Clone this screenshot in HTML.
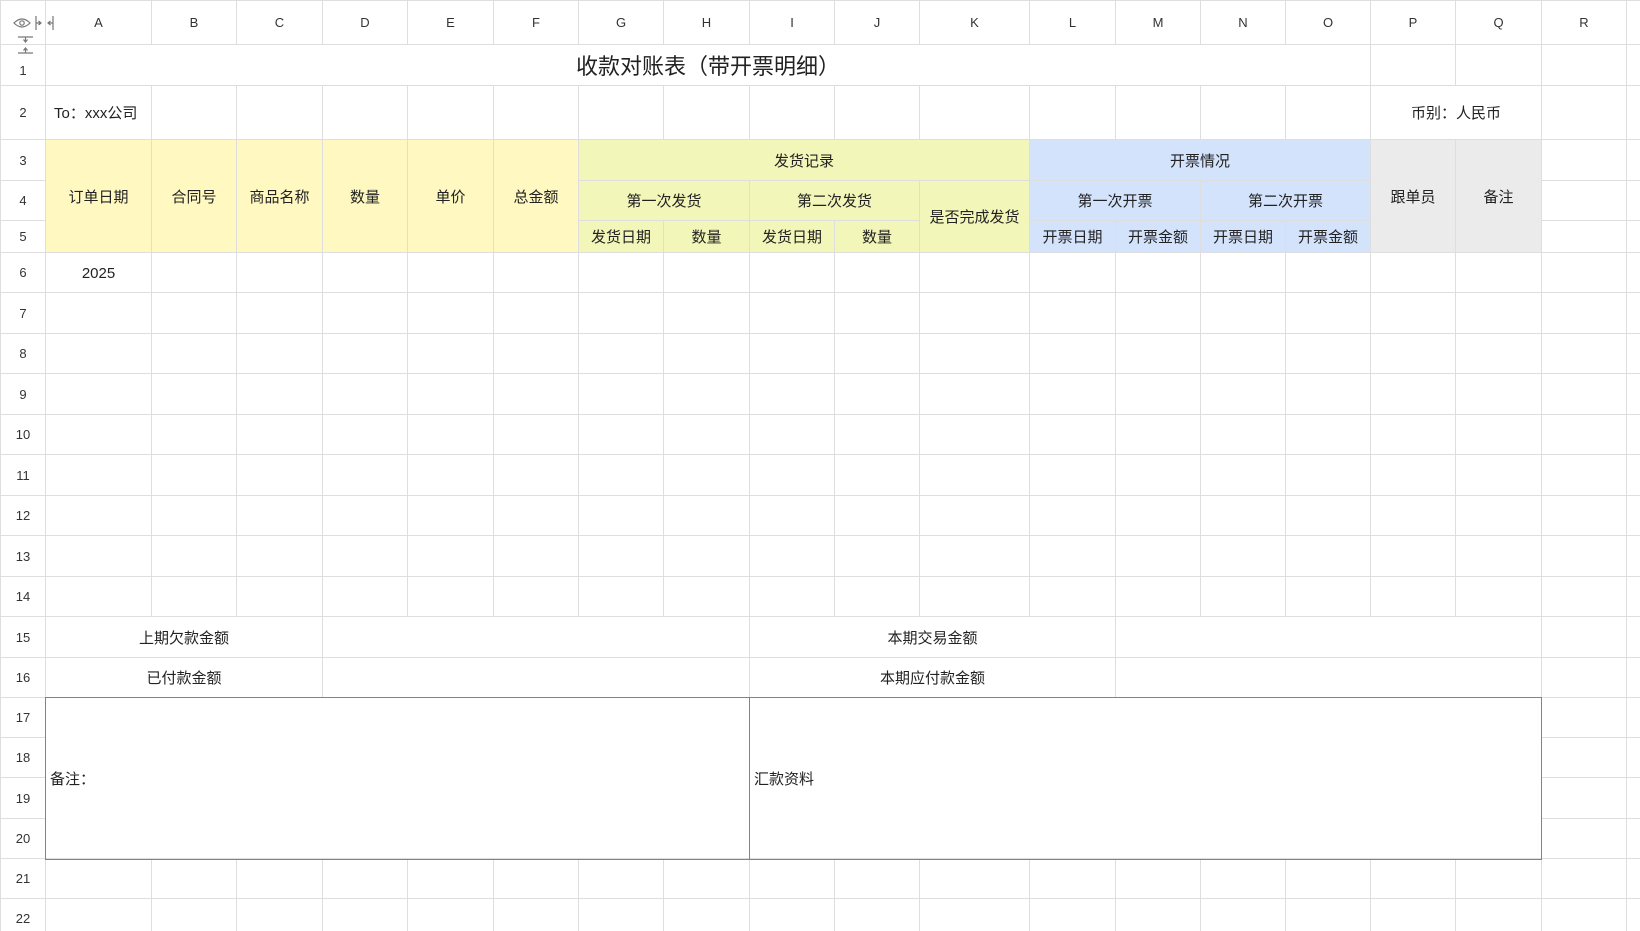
<!DOCTYPE html>
<html><head><meta charset="utf-8">
<style>
html,body{margin:0;padding:0;background:#fff;overflow:hidden;width:1640px;height:931px}
table{border-collapse:collapse;table-layout:fixed;width:1640px;font-family:"Liberation Sans","Noto Sans CJK SC",sans-serif;font-size:15px;color:#222}
td{border:1px solid #dedede;padding:0;text-align:center;vertical-align:middle;white-space:nowrap;overflow:hidden}
tr.h td{font-size:13px;color:#333;background:#fff}
td.rh{font-size:13px;color:#333;background:#fff}
.y{background:#fff9c1}
.g{background:#f2f6b8}
.b{background:#d4e3fc}
.gr{background:#ebebeb}
.l{text-align:left;padding-left:6px}
.ov{position:absolute;border:1px solid #7e8296;box-sizing:border-box;pointer-events:none}
</style></head><body>
<table>
<colgroup><col style="width:45px"><col style="width:106px"><col style="width:85px"><col style="width:86px"><col style="width:85px"><col style="width:86px"><col style="width:85px"><col style="width:85px"><col style="width:86px"><col style="width:85px"><col style="width:85px"><col style="width:110px"><col style="width:86px"><col style="width:85px"><col style="width:85px"><col style="width:85px"><col style="width:85px"><col style="width:86px"><col style="width:85px"><col style="width:14px"></colgroup>
<tr class="h" style="height:44px"><td></td><td>A</td><td>B</td><td>C</td><td>D</td><td>E</td><td>F</td><td>G</td><td>H</td><td>I</td><td>J</td><td>K</td><td>L</td><td>M</td><td>N</td><td>O</td><td>P</td><td>Q</td><td>R</td><td></td></tr>
<tr style="height:41px"><td class="rh" style="padding-top:10px">1</td><td colspan="15" style="font-size:22px">收款对账表（带开票明细）</td><td></td><td></td><td></td><td></td></tr>
<tr style="height:54px"><td class="rh">2</td><td class="l" style="padding-left:8px">To：xxx公司</td><td></td><td></td><td></td><td></td><td></td><td></td><td></td><td></td><td></td><td></td><td></td><td></td><td></td><td></td><td colspan="2">币别：人民币</td><td></td><td></td></tr>
<tr style="height:41px"><td class="rh">3</td><td rowspan="3" class="y">订单日期</td><td rowspan="3" class="y">合同号</td><td rowspan="3" class="y">商品名称</td><td rowspan="3" class="y">数量</td><td rowspan="3" class="y">单价</td><td rowspan="3" class="y">总金额</td><td colspan="5" class="g">发货记录</td><td colspan="4" class="b">开票情况</td><td rowspan="3" class="gr">跟单员</td><td rowspan="3" class="gr">备注</td><td></td><td></td></tr>
<tr style="height:40px"><td class="rh">4</td><td colspan="2" class="g">第一次发货</td><td colspan="2" class="g">第二次发货</td><td rowspan="2" class="g">是否完成发货</td><td colspan="2" class="b">第一次开票</td><td colspan="2" class="b">第二次开票</td><td></td><td></td></tr>
<tr style="height:32px"><td class="rh">5</td><td class="g">发货日期</td><td class="g">数量</td><td class="g">发货日期</td><td class="g">数量</td><td class="b">开票日期</td><td class="b">开票金额</td><td class="b">开票日期</td><td class="b">开票金额</td><td></td><td></td></tr>
<tr style="height:40px"><td class="rh">6</td><td style="padding-top:2px">2025</td><td></td><td></td><td></td><td></td><td></td><td></td><td></td><td></td><td></td><td></td><td></td><td></td><td></td><td></td><td></td><td></td><td></td><td></td></tr>
<tr style="height:41px"><td class="rh">7</td><td></td><td></td><td></td><td></td><td></td><td></td><td></td><td></td><td></td><td></td><td></td><td></td><td></td><td></td><td></td><td></td><td></td><td></td><td></td></tr>
<tr style="height:40px"><td class="rh">8</td><td></td><td></td><td></td><td></td><td></td><td></td><td></td><td></td><td></td><td></td><td></td><td></td><td></td><td></td><td></td><td></td><td></td><td></td><td></td></tr>
<tr style="height:41px"><td class="rh">9</td><td></td><td></td><td></td><td></td><td></td><td></td><td></td><td></td><td></td><td></td><td></td><td></td><td></td><td></td><td></td><td></td><td></td><td></td><td></td></tr>
<tr style="height:40px"><td class="rh">10</td><td></td><td></td><td></td><td></td><td></td><td></td><td></td><td></td><td></td><td></td><td></td><td></td><td></td><td></td><td></td><td></td><td></td><td></td><td></td></tr>
<tr style="height:41px"><td class="rh">11</td><td></td><td></td><td></td><td></td><td></td><td></td><td></td><td></td><td></td><td></td><td></td><td></td><td></td><td></td><td></td><td></td><td></td><td></td><td></td></tr>
<tr style="height:40px"><td class="rh">12</td><td></td><td></td><td></td><td></td><td></td><td></td><td></td><td></td><td></td><td></td><td></td><td></td><td></td><td></td><td></td><td></td><td></td><td></td><td></td></tr>
<tr style="height:41px"><td class="rh">13</td><td></td><td></td><td></td><td></td><td></td><td></td><td></td><td></td><td></td><td></td><td></td><td></td><td></td><td></td><td></td><td></td><td></td><td></td><td></td></tr>
<tr style="height:40px"><td class="rh">14</td><td></td><td></td><td></td><td></td><td></td><td></td><td></td><td></td><td></td><td></td><td></td><td></td><td></td><td></td><td></td><td></td><td></td><td></td><td></td></tr>
<tr style="height:41px"><td class="rh">15</td><td colspan="3">上期欠款金额</td><td colspan="5"></td><td colspan="4">本期交易金额</td><td colspan="5"></td><td></td><td></td></tr>
<tr style="height:40px"><td class="rh">16</td><td colspan="3">已付款金额</td><td colspan="5"></td><td colspan="4">本期应付款金额</td><td colspan="5"></td><td></td><td></td></tr>
<tr style="height:40px"><td class="rh">17</td><td colspan="8" rowspan="4" class="l" style="padding-left:4px">备注：</td><td colspan="9" rowspan="4" class="l" style="padding-left:4px">汇款资料</td><td></td><td></td></tr>
<tr style="height:40px"><td class="rh">18</td><td></td><td></td></tr>
<tr style="height:41px"><td class="rh">19</td><td></td><td></td></tr>
<tr style="height:40px"><td class="rh">20</td><td></td><td></td></tr>
<tr style="height:40px"><td class="rh">21</td><td></td><td></td><td></td><td></td><td></td><td></td><td></td><td></td><td></td><td></td><td></td><td></td><td></td><td></td><td></td><td></td><td></td><td></td><td></td></tr>
<tr style="height:40px"><td class="rh">22</td><td></td><td></td><td></td><td></td><td></td><td></td><td></td><td></td><td></td><td></td><td></td><td></td><td></td><td></td><td></td><td></td><td></td><td></td><td></td></tr>
</table>
<div class="ov" style="left:45px;top:697px;width:705px;height:163px"></div>
<div class="ov" style="left:749px;top:697px;width:793px;height:163px"></div>
<svg width="60" height="60" style="position:absolute;left:0;top:0" fill="none" stroke="#777" stroke-width="1.2">
<path d="M14 23 Q22 15 30 23 Q22 31 14 23Z"/><circle cx="22" cy="23" r="2.2"/>
<path d="M36 16v14M53 16v14M36 23h5M53 23h-5M38.5 21l2.5 2-2.5 2M50.5 21l-2.5 2 2.5 2"/>
<path d="M18 37h15M18 53h15M25.5 37v5M25.5 53v-5M23.5 39.5l2 2.5 2-2.5M23.5 50.5l2-2.5 2 2.5"/>
</svg>
</body></html>
